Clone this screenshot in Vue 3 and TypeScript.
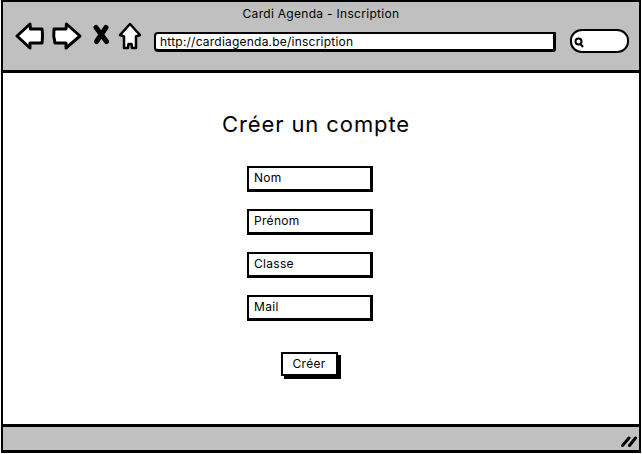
<script setup lang="ts">
const fields: string[] = ['Nom', 'Prénom', 'Classe', 'Mail']
</script>

<template>
  <div class="frame">
    <header class="top">
      <div class="title">Cardi Agenda - Inscription</div>
      <div class="toolbar">
        <svg class="nav" width="142" height="32" viewBox="0 0 142 32">
          <g fill="#fff" stroke="#000" stroke-width="3" stroke-linejoin="round">
            <path d="M2 15 L15 3 L15.500 8 L27 8 Q28 14 27 22 L15 22 L15 27 Z" />
            <path d="M39 8 L51 8 L51.500 3 L65 15 L51 27 L51 22 L40 22 Q38 15 39 8 Z" />
          </g>
          <path d="M105 14 L115 3 L125 14 L121 15.500 L121 27 L117 27 L116.500 23 L113.500 23 L113 27 L109 27 L109 15.500 Z" fill="#fff" stroke="#000" stroke-width="2.500" stroke-linejoin="round" />
          <path d="M81 6.500 L91.500 20.500 M91 6.500 L81.500 20.500" fill="none" stroke="#000" stroke-width="5" stroke-linecap="round" />
        </svg>
        <div class="address">http://cardiagenda.be/inscription</div>
        <div class="search">
          <svg width="13" height="13" viewBox="0 0 13 13">
            <circle cx="5.500" cy="5.500" r="3" fill="none" stroke="#000" stroke-width="2" />
            <path d="M7.500 8 L10 11" stroke="#000" stroke-width="2" />
          </svg>
        </div>
      </div>
    </header>

    <main class="content">
      <h1 class="heading">Créer un compte</h1>
      <div class="fields">
        <div v-for="field in fields" :key="field" class="field">{{ field }}</div>
      </div>
      <button class="submit" type="button">Créer</button>
    </main>

    <footer class="bottom">
      <svg width="16" height="12" viewBox="0 0 16 12">
        <path d="M1.500 10.500 L8 3 M8.500 10.500 L14.500 3" stroke="#000" stroke-width="3" stroke-linecap="round" fill="none" />
      </svg>
    </footer>
  </div>
</template>

<style>
html, body {
  margin: 0;
  background: #fff;
}
</style>

<style scoped>
.frame {
  box-sizing: border-box;
  width: 640px;
  height: 453px;
  margin-left: 1px;
  border: 2px solid #000;
  border-width: 2px 2px 3px 2px;
  display: flex;
  flex-direction: column;
  font-family: "Inter", "Lato", sans-serif;
  color: #000;
  background: #fff;
}
.top {
  box-sizing: border-box;
  height: 71px;
  background: #c0c0c0;
  border-bottom: 3px solid #000;
  flex: none;
}
.title {
  text-align: center;
  font-size: 12px;
  line-height: 16px;
  padding-top: 4px;
  height: 15px;
  letter-spacing: 0.3px;
}
.toolbar {
  display: flex;
  align-items: flex-start;
  padding-left: 12px;
}
.nav {
  flex: none;
}
.address {
  box-sizing: border-box;
  width: 402px;
  height: 20px;
  margin: 11px 0 0 -3px;
  background: #fff;
  border: 2px solid #000;
  border-width: 2px 3px 3px 2px;
  border-radius: 4px 1px 3px 4px;
  font-size: 12px;
  line-height: 15px;
  padding-left: 4px;
  letter-spacing: 0.22px;
}
.search {
  box-sizing: border-box;
  width: 59px;
  height: 24px;
  margin: 8px 0 0 14px;
  background: #fff;
  border: 2px solid #000;
  border-radius: 12px / 11px;
  display: flex;
  align-items: center;
  padding: 2px 0 0 1px;
}
.content {
  flex: 1;
  display: flex;
  flex-direction: column;
  align-items: center;
  min-height: 0;
  padding-right: 22px;
}
.heading {
  margin: 35px 0 0 12px;
  font-size: 22px;
  line-height: 32px;
  font-weight: 400;
  letter-spacing: 0.9px;
}
.fields {
  display: flex;
  flex-direction: column;
  gap: 17px;
  margin-top: 26px;
}
.field {
  box-sizing: border-box;
  width: 126px;
  height: 26px;
  background: #fff;
  border: 2px solid #000;
  border-width: 2px 3px 3px 2px;
  font-size: 12px;
  line-height: 19px;
  padding-left: 5px;
  letter-spacing: 0.3px;
}
.submit {
  box-sizing: border-box;
  width: 57px;
  height: 24px;
  margin: 31px 2px 0 0;
  padding: 0;
  background: #fff;
  color: #000;
  border: 2px solid #000;
  box-shadow: 3px 3px 0 #000;
  font-family: inherit;
  font-size: 12px;
  line-height: 18px;
  letter-spacing: 0.3px;
}
.bottom {
  box-sizing: border-box;
  height: 26px;
  flex: none;
  background: #c0c0c0;
  border-top: 3px solid #000;
  display: flex;
  justify-content: flex-end;
  align-items: center;
  padding: 4px 2px 0 0;
}
</style>
